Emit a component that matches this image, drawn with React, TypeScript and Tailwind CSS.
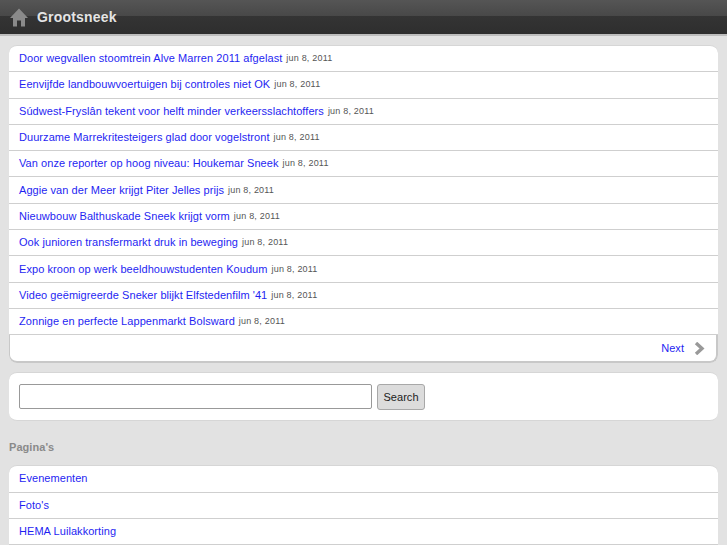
const headlines = [
  'Door wegvallen stoomtrein Alve Marren 2011 afgelast',
  'Eenvijfde landbouwvoertuigen bij controles niet OK',
  'Súdwest-Fryslân tekent voor helft minder verkeersslachtoffers',
  'Duurzame Marrekritesteigers glad door vogelstront',
  'Van onze reporter op hoog niveau: Houkemar Sneek',
  'Aggie van der Meer krijgt Piter Jelles prijs',
  'Nieuwbouw Balthuskade Sneek krijgt vorm',
  'Ook junioren transfermarkt druk in beweging',
  'Expo kroon op werk beeldhouwstudenten Koudum',
  "Video geëmigreerde Sneker blijkt Elfstedenfilm '41",
  'Zonnige en perfecte Lappenmarkt Bolsward',
];

const pages = ['Evenementen', "Foto's", 'HEMA Luilakkorting'];

export default function App() {
  return (
    <div className="h-[545px] overflow-hidden bg-[#e2e2e2] font-['Liberation_Sans',Arial,sans-serif] text-[11px] leading-[14px] tracking-[0.06px]">
      <header className="h-[36px] flex items-center pl-[10px] border-b-2 border-[#bdbdbd] bg-[linear-gradient(#555_0,#484848_47%,#343434_47%,#2e2e2e_100%)]">
        <svg width="18" height="19" viewBox="0 0 18 19" className="mt-[1px]" aria-hidden="true">
          <path d="M9 0.5 L0 10 H3 V18.5 H7 V12.5 H11 V18.5 H15 V10 H18 Z" fill="#8a8a8a" />
        </svg>
        <span className="ml-[9px] text-[14px] tracking-[0.2px] font-bold text-[#e4e4e4] -mt-[1px]">Grootsneek</span>
      </header>

      <main className="px-[9px] pt-[9px]">
        <ul className="bg-white rounded-[8px] border-t border-[#d6d6d6]">
          {headlines.map((title) => (
            <li key={title} className="h-[26.3px] pl-[10px] pb-[1px] flex items-center border-b border-[#cfcfcf]">
              <a className="text-[#1f1ff2]">{title}</a>
              <span className="ml-[4px] text-[9px] tracking-[0.2px] text-[#555]">jun 8, 2011</span>
            </li>
          ))}
          <li className="h-[28px] flex items-center justify-end pr-[11px] border-l border-r-2 border-b-2 border-[#c8c8c8] rounded-b-[8px]">
            <a className="text-[#1f1ff2]">Next</a>
            <svg width="11" height="13" viewBox="0 0 11 13" className="ml-[10px]" aria-hidden="true">
              <path d="M2 1 L8 6.5 L2 12" fill="none" stroke="#999" strokeWidth="3.4" />
            </svg>
          </li>
        </ul>

        <form className="mt-[9px] h-[49px] bg-white rounded-[8px] border-y border-[#d6d6d6] pl-[10px] flex items-center">
          <input className="w-[353px] h-[25px] bg-white border border-[#999] rounded-[2px]" />
          <button type="button" className="ml-[5px] w-[48px] h-[26px] rounded-[3px] border border-[#a8a8a8] bg-[#dcdcdc] text-[#222]">
            Search
          </button>
        </form>

        <h2 className="mt-[19px] text-[11px] font-bold text-[#8a8a8a]">Pagina's</h2>

        <ul className="mt-[11px] bg-white rounded-t-[8px] border-t border-[#d6d6d6]">
          {pages.map((page) => (
            <li key={page} className="h-[26.3px] pl-[10px] pb-[1px] flex items-center border-b border-[#cfcfcf]">
              <a className="text-[#1f1ff2]">{page}</a>
            </li>
          ))}
        </ul>
      </main>
    </div>
  );
}
